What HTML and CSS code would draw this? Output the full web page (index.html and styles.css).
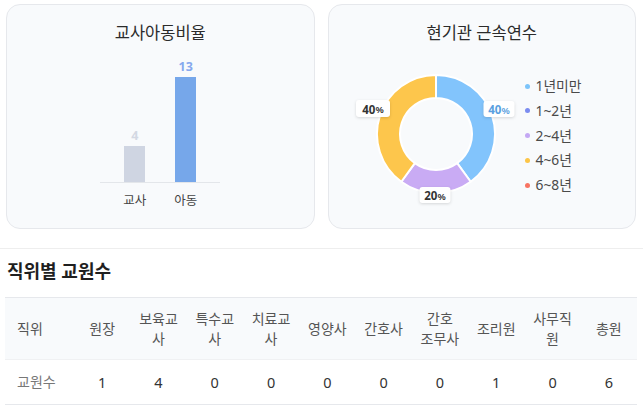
FILE: index.html
```html
<!DOCTYPE html>
<html lang="ko">
<head>
<meta charset="utf-8">
<title>교원 현황</title>
<link rel="stylesheet" href="styles.css">
</head>
<body>
<div class="cards">
  <section class="card">
    <h2 class="card-title">교사아동비율</h2>
    <div class="bar-chart">
      <div class="plot">
        <div class="bar-col">
          <span class="val val-teacher">4</span>
          <div class="bar bar-teacher" style="height:36px"></div>
        </div>
        <div class="bar-col">
          <span class="val val-child">13</span>
          <div class="bar bar-child" style="height:105px"></div>
        </div>
      </div>
      <div class="axis-labels"><span>교사</span><span>아동</span></div>
    </div>
  </section>
  <section class="card">
    <h2 class="card-title">현기관 근속연수</h2>
    <div class="donut-row">
      <svg class="donut" width="178" height="150" viewBox="0 0 178 150">
        <path class="seg seg-blue" d="M90 16 A59 59 0 0 1 124.68 122.73 L111.16 104.12 A36 36 0 0 0 90 39 Z"/>
        <path class="seg seg-purple" d="M124.68 122.73 A59 59 0 0 1 55.32 122.73 L68.84 104.12 A36 36 0 0 0 111.16 104.12 Z"/>
        <path class="seg seg-yellow" d="M55.32 122.73 A59 59 0 0 1 90 16 L90 39 A36 36 0 0 0 68.84 104.12 Z"/>
        <rect class="lbl-box" x="137.5" y="42" width="31" height="16" rx="3"/>
        <text class="lbl lbl-blue" x="153" y="50.5">40<tspan class="pct">%</tspan></text>
        <rect class="lbl-box" x="10" y="41" width="34" height="17" rx="3"/>
        <text class="lbl" x="27" y="50">40<tspan class="pct">%</tspan></text>
        <rect class="lbl-box" x="73.5" y="128" width="31" height="16" rx="3"/>
        <text class="lbl" x="89" y="136.5">20<tspan class="pct">%</tspan></text>
      </svg>
      <ul class="legend">
        <li><i class="dot d1"></i>1년미만</li>
        <li><i class="dot d2"></i>1~2년</li>
        <li><i class="dot d3"></i>2~4년</li>
        <li><i class="dot d4"></i>4~6년</li>
        <li><i class="dot d5"></i>6~8년</li>
      </ul>
    </div>
  </section>
</div>
<div class="divider"></div>
<h3 class="section-title">직위별 교원수</h3>
<table class="staff">
  <colgroup><col class="c-first"><col span="10"></colgroup>
  <thead>
    <tr>
      <th class="first">직위</th>
      <th>원장</th>
      <th>보육교사</th>
      <th>특수교사</th>
      <th>치료교사</th>
      <th>영양사</th>
      <th>간호사</th>
      <th>간호<br>조무사</th>
      <th>조리원</th>
      <th>사무직원</th>
      <th>총원</th>
    </tr>
  </thead>
  <tbody>
    <tr>
      <td class="first">교원수</td>
      <td>1</td><td>4</td><td>0</td><td>0</td><td>0</td><td>0</td><td>0</td><td>1</td><td>0</td><td>6</td>
    </tr>
  </tbody>
</table>
</body>
</html>
```
FILE: styles.css
```css
* { box-sizing: border-box; }
body {
  margin: 0;
  background: #fff;
  font-family: "Noto Sans", "Noto Sans CJK KR", sans-serif;
  color: #333;
}
.cards {
  display: grid;
  grid-template-columns: 1fr 1fr;
  gap: 13px;
  padding: 4px 7px 0 6px;
}
.card {
  height: 225px;
  border: 1px solid #e6e8ec;
  border-radius: 14px;
  background: #f8fafc;
  padding-top: 16px;
}
.card-title {
  margin: 0;
  font-size: 16.5px;
  font-weight: 400;
  line-height: 24px;
  text-align: center;
  color: #2b2b2b;
}
.bar-chart {
  width: 120px;
  margin: 0 auto;
}
.plot {
  height: 138px;
  display: flex;
  justify-content: center;
  align-items: flex-end;
  border-bottom: 1px solid #e3e6ea;
}
.bar-col {
  width: 51px;
  display: flex;
  flex-direction: column;
  align-items: center;
}
.val {
  font-size: 12.5px;
  font-weight: 700;
  line-height: 16px;
  margin-bottom: 2px;
}
.val-teacher { color: #d3d8e3; }
.val-child { color: #86a9ee; }
.bar { width: 21px; }
.bar-teacher { background: #cfd5e2; }
.bar-child { background: #76a7ea; }
.axis-labels {
  display: flex;
  justify-content: center;
  margin-top: 9px;
}
.axis-labels span {
  width: 51px;
  text-align: center;
  font-size: 12.5px;
  line-height: 18px;
  color: #444;
}
.donut-row {
  display: flex;
  margin-top: 14px;
  padding-left: 17px;
}
.seg { stroke: #fff; stroke-width: 2; stroke-linejoin: round; }
.seg-blue { fill: #82c4fc; }
.seg-purple { fill: #c9abf4; }
.seg-yellow { fill: #fdc64c; }
.lbl-box {
  fill: #fff;
  filter: drop-shadow(0 1px 1.5px rgba(0, 0, 0, 0.14));
}
.lbl {
  font-family: "Noto Sans", sans-serif;
  font-size: 11.5px;
  font-weight: 700;
  fill: #333;
  text-anchor: middle;
  dominant-baseline: central;
}
.lbl-blue { fill: #5a9fe0; }
.pct { font-size: 9.5px; font-weight: 600; }
.legend {
  list-style: none;
  margin: 0;
  padding: 18px 0 0 1.5px;
  display: flex;
  flex-direction: column;
  gap: 6.75px;
}
.legend li {
  display: flex;
  align-items: center;
  gap: 5.5px;
  font-size: 13.8px;
  line-height: 18px;
  color: #4a4a4a;
}
.dot {
  width: 5px;
  height: 5px;
  border-radius: 50%;
}
.d1 { background: #7cc4fa; }
.d2 { background: #7b8cf0; }
.d3 { background: #c4a8f4; }
.d4 { background: #fcc547; }
.d5 { background: #f87462; }
.divider {
  margin-top: 19px;
  border-top: 1px solid #eeeeee;
}
.section-title {
  margin: 10px 0 0 7px;
  font-size: 18px;
  font-weight: 700;
  line-height: 24px;
  color: #1f1f1f;
}
.staff {
  margin: 14px 0 0 5px;
  width: 632px;
  table-layout: fixed;
  border-collapse: collapse;
  border-top: 1px solid #e6e8ec;
  border-bottom: 1px solid #e6e8ec;
}
.c-first { width: 69px; }
.staff th, .staff td {
  padding: 0 6px;
  text-align: center;
  vertical-align: middle;
  font-size: 14px;
  line-height: 20px;
}
.staff th {
  height: 62px;
  font-weight: 400;
  color: #555;
  background: #f8fafc;
  border-bottom: 1px solid #f0f1f3;
}
.staff td {
  height: 45px;
  color: #333;
  font-size: 14.5px;
}
.staff .first {
  text-align: left;
  padding-left: 12px;
}
.staff td.first { color: #777; font-size: 14px; }
```
